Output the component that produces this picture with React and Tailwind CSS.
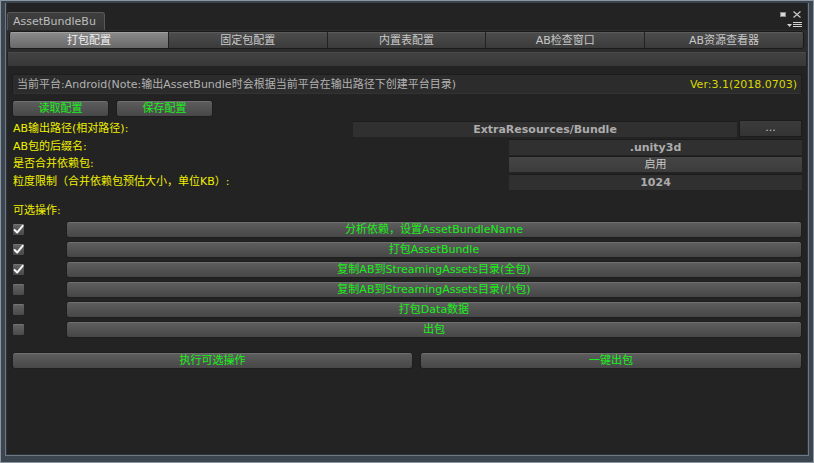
import React from "react";

const FONT = { fontFamily: '"DejaVu Sans","Noto Sans CJK SC",sans-serif' };

function Btn({ children, className = "", green = true }) {
  return (
    <div
      className={
        "h-[17px] flex items-center justify-center rounded-[3px] border border-[#1e1e1e] bg-gradient-to-b from-[#5e5e5e] to-[#474747] shadow-[inset_0_1px_0_#707070] text-[11px] leading-none " +
        (green ? "text-[#19f019] " : "text-[#c4c4c4] ") +
        className
      }
    >
      {children}
    </div>
  );
}

function Check({ on }) {
  return (
    <div className="w-[13px] h-[13px] rounded-[2px] border border-[#222] bg-gradient-to-b from-[#646464] to-[#4a4a4a] shadow-[inset_0_1px_0_#747474] flex items-center justify-center">
      {on && (
        <svg width="12" height="11" viewBox="0 0 12 11">
          <path d="M1.8 6 L4.5 8.8 L10.5 1.5" fill="none" stroke="#f4f4f4" strokeWidth="2.2" strokeLinecap="round" strokeLinejoin="round" />
        </svg>
      )}
    </div>
  );
}

export default function App() {
  const tabs = ["打包配置", "固定包配置", "内置表配置", "AB检查窗口", "AB资源查看器"];
  const ops = [
    ["分析依赖，设置AssetBundleName", true],
    ["打包AssetBundle", true],
    ["复制AB到StreamingAssets目录(全包)", true],
    ["复制AB到StreamingAssets目录(小包)", false],
    ["打包Data数据", false],
    ["出包", false],
  ];
  return (
    <div
      style={FONT}
      className="w-[814px] h-[463px] bg-[#3a4550] border border-[#8c96a0] pt-[2px] px-[4px] pb-[6px] flex flex-col overflow-hidden"
    >
      <div className="flex-1 flex flex-col border-x border-b border-[#6e7984] bg-[#2b333c] px-[1px] pb-[1px]">
        {/* title bar */}
        <div className="h-[27px] bg-[#232323] flex items-end relative">
          <div className="h-[18px] w-[98px] bg-gradient-to-b from-[#3e3e3e] to-[#363636] border border-b-0 border-[#585858] rounded-t-[3px] text-[11px] text-[#bdbdbd] flex items-center pl-[5px] leading-none">
            AssetBundleBu
          </div>
          <div className="absolute right-[21px] top-[9px] w-[6px] h-[5px] bg-[#d8d8d8] border border-[#8a8a8a]" />
          <svg className="absolute right-[6px] top-[8px]" width="8" height="7" viewBox="0 0 8 7">
            <path d="M0.5 0.5 L7.5 6.5 M7.5 0.5 L0.5 6.5" stroke="#cfcfcf" strokeWidth="1.1" />
          </svg>
          <div className="absolute right-[5px] top-[19px] flex items-center gap-[1px]">
            <svg width="5" height="3" viewBox="0 0 5 3">
              <path d="M0 0 H5 L2.5 3 Z" fill="#d0d0d0" />
            </svg>
            <svg width="9" height="6" viewBox="0 0 9 6">
              <path d="M0 0.5 H9 M0 2.5 H9 M0 4.5 H9" stroke="#d0d0d0" strokeWidth="1" />
            </svg>
          </div>
        </div>
        {/* toolbar */}
        <div className="bg-[#2c2c2c] pl-[2px] pr-[3px] pt-[1px] pb-[3px]">
          <div className="h-[18px] flex rounded-[3px] border border-[#1a1a1a] overflow-hidden">
            {tabs.map((t, i) => (
              <div
                key={t}
                className={
                  "flex-1 flex items-center justify-center text-[11px] leading-none border-r border-[#222] last:border-r-0 " +
                  (i === 0
                    ? "bg-gradient-to-b from-[#8c8c8c] to-[#686868] text-[#f0f0f0] shadow-[inset_0_1px_0_#a0a0a0]"
                    : "bg-gradient-to-b from-[#4d4d4d] to-[#3b3b3b] text-[#c8c8c8] shadow-[inset_0_1px_0_#5a5a5a]")
                }
              >
                {t}
              </div>
            ))}
          </div>
        </div>
        <div className="bg-[#232323] px-[1px] pb-[1px]">
          <div className="h-[14px] bg-gradient-to-b from-[#424242] to-[#383838] border-t border-[#4a4a4a]" />
        </div>
        {/* content */}
        <div className="flex-1 bg-[#232323] px-[5px] pt-[7px] flex flex-col">
          <div className="h-[20px] bg-[#2c2c2c] border border-[#1c1c1c] border-b-[#333] rounded-[2px] flex items-center justify-between pl-[4px] pr-[4px] text-[11px] leading-none">
            <span className="text-[#b2b2b2]">当前平台:Android(Note:输出AssetBundle时会根据当前平台在输出路径下创建平台目录)</span>
            <span className="text-[#d8d800]">Ver:3.1(2018.0703)</span>
          </div>
          <div className="flex gap-[7px] mt-[6px]">
            <Btn className="w-[97px]">读取配置</Btn>
            <Btn className="w-[97px]">保存配置</Btn>
          </div>
          <div className="flex flex-col mt-[3px] text-[11px] leading-none">
            <div className="h-[17px] flex items-center">
              <div className="flex-1 text-[#f0f000] pl-[1px]">AB输出路径(相对路径):</div>
              <div className="w-[384px] h-[16px] bg-[#303030] border-t border-[#1c1c1c] flex items-center justify-center font-bold text-[#acacac]">
                ExtraResources/Bundle
              </div>
              <div className="w-[63px] h-[17px] ml-[2px] bg-gradient-to-b from-[#3c3c3c] to-[#333333] border border-[#1c1c1c] flex items-center justify-center text-[#c0c0c0] pb-[3px]">
                ...
              </div>
            </div>
            <div className="h-[17px] mt-[1px] flex items-center">
              <div className="flex-1 text-[#f0f000] pl-[1px]">AB包的后缀名:</div>
              <div className="w-[293px] h-[16px] bg-[#303030] border-t border-[#1c1c1c] flex items-center justify-center font-bold text-[#acacac]">
                .unity3d
              </div>
            </div>
            <div className="h-[17px] flex items-center">
              <div className="flex-1 text-[#f0f000] pl-[1px]">是否合并依赖包:</div>
              <div className="w-[293px] h-[16px] bg-gradient-to-b from-[#454545] to-[#3c3c3c] border-t border-[#1c1c1c] flex items-center justify-center text-[#c8c8c8]">
                启用
              </div>
            </div>
            <div className="h-[17px] mt-[1px] flex items-center">
              <div className="flex-1 text-[#f0f000] pl-[1px]">粒度限制（合并依赖包预估大小，单位KB）:</div>
              <div className="w-[293px] h-[16px] bg-[#303030] border-t border-[#1c1c1c] flex items-center justify-center font-bold text-[#acacac]">
                1024
              </div>
            </div>
          </div>
          <div className="mt-[13px] text-[11px] leading-none text-[#f0f000] pl-[1px] h-[14px] flex items-center">可选操作:</div>
          <div className="flex flex-col gap-[3px] mt-[4px]">
            {ops.map(([t, on]) => (
              <div key={t} className="flex items-center h-[17px]">
                <div className="w-[54px]">
                  <Check on={on} />
                </div>
                <Btn className="flex-1">{t}</Btn>
              </div>
            ))}
          </div>
          <div className="flex gap-[7px] mt-[14px]">
            <Btn className="w-[401px]">执行可选操作</Btn>
            <Btn className="flex-1">一键出包</Btn>
          </div>
        </div>
      </div>
    </div>
  );
}
